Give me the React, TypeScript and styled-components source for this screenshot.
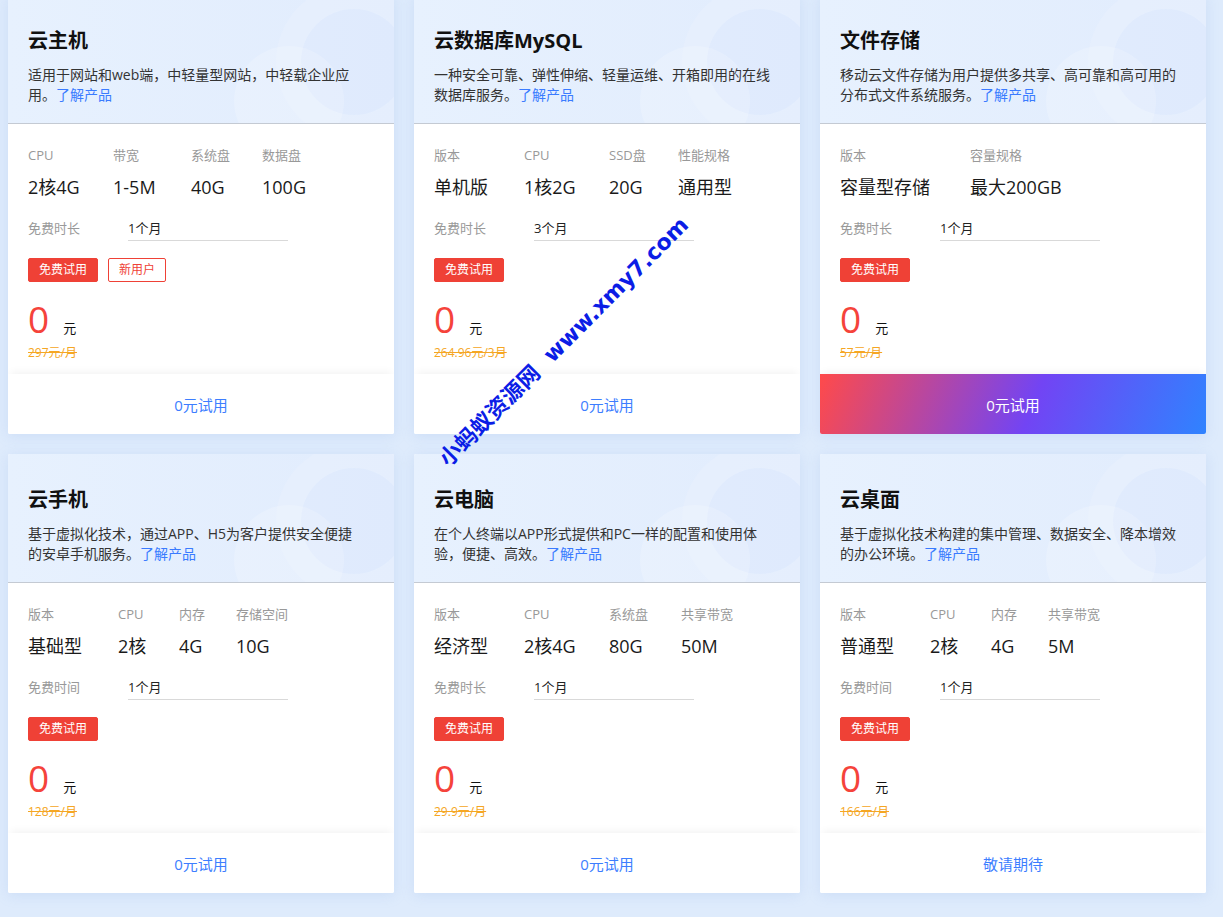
import React from 'react';
import styled, { createGlobalStyle } from 'styled-components';

type Spec = { label: string; value: string; w?: number };
type Product = {
  title: string;
  desc: string;
  specs: Spec[];
  freeLabel: string;
  freeValue: string;
  newUser?: boolean;
  was: string;
  action: string;
  hot?: boolean;
};

const products: Product[] = [
  {
    title: '云主机',
    desc: '适用于网站和web端，中轻量型网站，中轻载企业应用。',
    specs: [
      { label: 'CPU', value: '2核4G', w: 85 },
      { label: '带宽', value: '1-5M', w: 78 },
      { label: '系统盘', value: '40G', w: 71 },
      { label: '数据盘', value: '100G' },
    ],
    freeLabel: '免费时长',
    freeValue: '1个月',
    newUser: true,
    was: '297元/月',
    action: '0元试用',
  },
  {
    title: '云数据库MySQL',
    desc: '一种安全可靠、弹性伸缩、轻量运维、开箱即用的在线数据库服务。',
    specs: [
      { label: '版本', value: '单机版', w: 90 },
      { label: 'CPU', value: '1核2G', w: 85 },
      { label: 'SSD盘', value: '20G', w: 69 },
      { label: '性能规格', value: '通用型' },
    ],
    freeLabel: '免费时长',
    freeValue: '3个月',
    was: '264.96元/3月',
    action: '0元试用',
  },
  {
    title: '文件存储',
    desc: '移动云文件存储为用户提供多共享、高可靠和高可用的分布式文件系统服务。',
    specs: [
      { label: '版本', value: '容量型存储', w: 130 },
      { label: '容量规格', value: '最大200GB' },
    ],
    freeLabel: '免费时长',
    freeValue: '1个月',
    was: '57元/月',
    action: '0元试用',
    hot: true,
  },
  {
    title: '云手机',
    desc: '基于虚拟化技术，通过APP、H5为客户提供安全便捷的安卓手机服务。',
    specs: [
      { label: '版本', value: '基础型', w: 90 },
      { label: 'CPU', value: '2核', w: 61 },
      { label: '内存', value: '4G', w: 57 },
      { label: '存储空间', value: '10G' },
    ],
    freeLabel: '免费时间',
    freeValue: '1个月',
    was: '128元/月',
    action: '0元试用',
  },
  {
    title: '云电脑',
    desc: '在个人终端以APP形式提供和PC一样的配置和使用体验，便捷、高效。',
    specs: [
      { label: '版本', value: '经济型', w: 90 },
      { label: 'CPU', value: '2核4G', w: 85 },
      { label: '系统盘', value: '80G', w: 72 },
      { label: '共享带宽', value: '50M' },
    ],
    freeLabel: '免费时长',
    freeValue: '1个月',
    was: '29.9元/月',
    action: '0元试用',
  },
  {
    title: '云桌面',
    desc: '基于虚拟化技术构建的集中管理、数据安全、降本增效的办公环境。',
    specs: [
      { label: '版本', value: '普通型', w: 90 },
      { label: 'CPU', value: '2核', w: 61 },
      { label: '内存', value: '4G', w: 57 },
      { label: '共享带宽', value: '5M' },
    ],
    freeLabel: '免费时间',
    freeValue: '1个月',
    was: '166元/月',
    action: '敬请期待',
  },
];

function App() {
  return (
    <>
      <GlobalStyle />
      <Page>
        <Grid>
          {products.map((p) => (
            <Card key={p.title}>
              <Header>
                <Ring />
                <Bubble />
                <Title>{p.title}</Title>
                <Desc>
                  <span>{p.desc}</span>
                  <Link>了解产品</Link>
                </Desc>
              </Header>
              <Body>
                <Specs>
                  {p.specs.map((s) => (
                    <SpecItem key={s.label} $w={s.w}>
                      <SpecLabel>{s.label}</SpecLabel>
                      <SpecValue>{s.value}</SpecValue>
                    </SpecItem>
                  ))}
                </Specs>
                <FreeRow>
                  <FreeLabel>{p.freeLabel}</FreeLabel>
                  <FreeValue>{p.freeValue}</FreeValue>
                </FreeRow>
                <Tags>
                  <Tag $solid>免费试用</Tag>
                  {p.newUser && <Tag>新用户</Tag>}
                </Tags>
                <PriceRow>
                  <Price>0</Price>
                  <Unit>元</Unit>
                </PriceRow>
                <Was>{p.was}</Was>
              </Body>
              <Action $hot={p.hot}>{p.action}</Action>
            </Card>
          ))}
        </Grid>
        <Watermark>小蚂蚁资源网&nbsp; www.xmy7.com</Watermark>
      </Page>
    </>
  );
}

const GlobalStyle = createGlobalStyle`
  html, body {
    margin: 0;
    padding: 0;
    background: #deebfc;
    overflow: hidden;
  }
  body {
    font-family: "Open Sans", "Noto Sans CJK SC", sans-serif;
    color: #222;
  }
`;

const Page = styled.div`
  position: relative;
  width: 1223px;
  height: 917px;
  overflow: hidden;
  background: #deebfc;
`;

const Grid = styled.div`
  display: grid;
  grid-template-columns: repeat(3, 386px);
  gap: 20px;
  padding-left: 8px;
  margin-top: -5px;
`;

const Card = styled.div`
  display: flex;
  flex-direction: column;
  height: 439px;
  background: #fff;
  border-radius: 2px;
  box-shadow: 0 2px 14px rgba(120, 160, 220, 0.18);
  overflow: hidden;
`;

const Header = styled.div`
  position: relative;
  height: 129px;
  box-sizing: border-box;
  padding: 34px 20px 0;
  background: linear-gradient(90deg, #e7f1fe 0%, #e1ecfd 100%);
  border-bottom: 1px solid #c4cad3;
  overflow: hidden;
`;

const Ring = styled.div`
  position: absolute;
  left: 268px;
  top: -11px;
  width: 156px;
  height: 156px;
  box-sizing: border-box;
  border-radius: 50%;
  border: 25px solid rgba(255, 255, 255, 0.2);
  background: rgba(220, 232, 252, 0.35);
`;

const Bubble = styled.div`
  position: absolute;
  left: 226px;
  top: 51px;
  width: 110px;
  height: 110px;
  border-radius: 50%;
  background: rgba(255, 255, 255, 0.18);
`;

const Title = styled.div`
  position: relative;
  font-size: 20px;
  line-height: 24px;
  font-weight: 700;
  color: #111;
`;

const Desc = styled.div`
  position: relative;
  margin-top: 12px;
  width: 336px;
  font-size: 14px;
  line-height: 20px;
  color: #333;
`;

const Link = styled.span`
  color: #3a7bff;
`;

const Body = styled.div`
  flex: 1;
  padding: 22px 20px 0;
`;

const Specs = styled.div`
  display: flex;
`;

const SpecItem = styled.div<{ $w?: number }>`
  display: flex;
  flex-direction: column;
  gap: 11px;
  width: ${(p) => (p.$w ? `${p.$w}px` : 'auto')};
  flex-shrink: 0;
`;

const SpecLabel = styled.div`
  font-size: 13px;
  line-height: 18px;
  color: #999;
  white-space: nowrap;
`;

const SpecValue = styled.div`
  font-size: 18px;
  line-height: 24px;
  color: #1a1a1a;
  white-space: nowrap;
`;

const FreeRow = styled.div`
  display: flex;
  align-items: flex-start;
  margin-top: 19px;
`;

const FreeLabel = styled.div`
  width: 100px;
  font-size: 13px;
  line-height: 20px;
  color: #999;
`;

const FreeValue = styled.div`
  width: 160px;
  height: 22px;
  font-size: 13px;
  line-height: 20px;
  color: #222;
  border-bottom: 1px solid #d9d9d9;
`;

const Tags = styled.div`
  display: flex;
  gap: 10px;
  margin-top: 17px;
`;

const Tag = styled.div<{ $solid?: boolean }>`
  height: 24px;
  box-sizing: border-box;
  padding: 0 10px;
  font-size: 12px;
  line-height: 22px;
  border-radius: 2px;
  border: 1px solid #ef4136;
  color: ${(p) => (p.$solid ? '#fff' : '#ef4136')};
  background: ${(p) => (p.$solid ? '#ef4136' : '#fff')};
`;

const PriceRow = styled.div`
  display: flex;
  align-items: baseline;
  gap: 14px;
  margin-top: 17px;
`;

const Price = styled.div`
  font-size: 37px;
  line-height: 40px;
  color: #f5433b;
`;

const Unit = styled.div`
  font-size: 13px;
  color: #111;
`;

const Was = styled.div`
  margin-top: 5px;
  font-size: 12px;
  line-height: 18px;
  color: #f5a623;
  text-decoration: line-through;
`;

const Action = styled.div<{ $hot?: boolean }>`
  height: 60px;
  flex-shrink: 0;
  display: flex;
  align-items: center;
  justify-content: center;
  font-size: 15px;
  color: ${(p) => (p.$hot ? '#fff' : '#3d7eff')};
  background: ${(p) =>
    p.$hot ? 'linear-gradient(112deg, #ff4a4a 0%, #7244f4 55%, #2f83ff 100%)' : '#fff'};
  box-shadow: 0 -5px 8px -3px rgba(0, 0, 0, 0.05);
`;

const Watermark = styled.div`
  position: absolute;
  left: 562px;
  top: 340px;
  transform: translate(-50%, -50%) rotate(-45deg);
  white-space: nowrap;
  font-family: "DejaVu Sans", "Noto Sans CJK SC", sans-serif;
  font-size: 22px;
  font-weight: 700;
  color: #0b1de6;
  pointer-events: none;
`;

export default App;
